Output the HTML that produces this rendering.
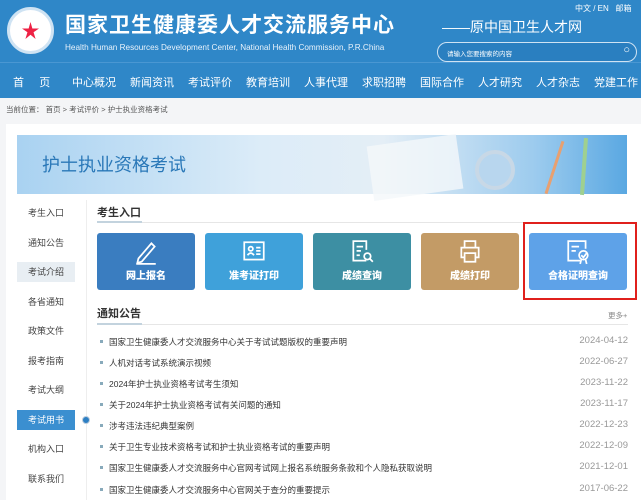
<!DOCTYPE html><html><head><meta charset="utf-8"><style>
*{margin:0;padding:0;box-sizing:border-box}
body{width:641px;height:500px;overflow:hidden;background:#f4f5f7;font-family:"Liberation Sans","Noto Sans CJK SC",sans-serif;position:relative}
.a{position:absolute}
.hd{left:0;top:0;width:641px;height:62px;background:#2f87c8}
.nav{left:0;top:62px;width:641px;height:36px;background:#2f87c8;border-top:1px solid #4a97d2}
.nav span{position:absolute;top:11px;color:#fff;font-size:11px}
.side div{position:absolute;left:17px;width:58px;height:20px;line-height:20px;text-align:center;font-size:9px;color:#444}
.card{position:absolute;top:233px;width:98px;height:57px;border-radius:3px;color:#fff;font-size:10px;font-weight:bold;text-align:center}
.card svg{position:absolute;left:37px;top:6px}
.card b{position:absolute;left:0;right:0;top:34px}
.li{position:absolute;left:100px;width:528px;font-size:8.5px;color:#333}
.li i{display:inline-block;width:3px;height:3px;background:#8ab;margin:0 6px 2px 0}
.li s{text-decoration:none;position:absolute;right:0;color:#999;font-size:9.5px;top:-1px}
</style></head><body>
<div class="a hd"></div>
<div class="a" style="left:7px;top:7px;width:47px;height:47px;border-radius:50%;background:#fff;border:3px solid #cfe3f3"><div style="position:absolute;left:12px;top:12px;width:17px;height:17px;background:#e24;clip-path:polygon(50% 0,61% 38%,100% 38%,68% 60%,80% 100%,50% 75%,20% 100%,32% 60%,0 38%,39% 38%)"></div></div>
<div class="a" style="left:65px;top:9px;color:#fff;font-size:21px;letter-spacing:1px;font-weight:bold">国家卫生健康委人才交流服务中心</div>
<div class="a" style="left:65px;top:43px;color:#e8f2fb;font-size:8.2px">Health Human Resources Development Center, National Health Commission, P.R.China</div>
<div class="a" style="left:442px;top:17px;color:#fff;font-size:14px">——原中国卫生人才网</div>
<div class="a" style="left:575px;top:3px;color:#fff;font-size:8px">中文 / EN &nbsp; 邮箱</div>
<div class="a" style="left:437px;top:42px;width:200px;height:20px;border:1px solid #cfe3f3;border-radius:10px;background:#2a7fc0;color:#fff;font-size:6.5px;padding:5px 0 0 9px">请输入您要搜索的内容<span style="position:absolute;right:6px;top:1px;font-size:11px">○</span></div>
<div class="a nav"><span style="left:13px">首&nbsp;&nbsp;&nbsp;&nbsp;&nbsp;页</span><span style="left:72px">中心概况</span><span style="left:130px">新闻资讯</span><span style="left:188px">考试评价</span><span style="left:246px">教育培训</span><span style="left:304px">人事代理</span><span style="left:362px">求职招聘</span><span style="left:420px">国际合作</span><span style="left:478px">人才研究</span><span style="left:536px">人才杂志</span><span style="left:594px">党建工作</span></div>
<div class="a" style="left:6px;top:104px;font-size:7.5px;color:#555">当前位置： 首页 &gt; 考试评价 &gt; 护士执业资格考试</div>
<div class="a" style="left:6px;top:124px;width:635px;height:376px;background:#fff"></div>
<div class="a" style="left:17px;top:135px;width:610px;height:59px;background:linear-gradient(90deg,#a9d2f1,#dcecf8 40%,#e4eef6 60%,#9ccbee 85%,#5aa8e2)"></div>
<div class="a" style="left:42px;top:151px;font-size:18px;color:#2a78b8">护士执业资格考试</div>
<div class="a" style="left:370px;top:140px;width:90px;height:55px;background:#f4f7fa;transform:rotate(-8deg);opacity:.8"></div>
<div class="a" style="left:475px;top:150px;width:40px;height:40px;border-radius:50%;border:4px solid #c8d8e6;background:#b8d6ee"></div>
<div class="a" style="left:553px;top:140px;width:3px;height:55px;background:#e8a070;transform:rotate(18deg)"></div>
<div class="a" style="left:582px;top:138px;width:4px;height:57px;background:#9fd090;transform:rotate(4deg)"></div>
<div class="a" style="left:86px;top:200px;width:1px;height:300px;background:#eee"></div>
<div class="side">
<div style="top:203px">考生入口</div><div style="top:233px">通知公告</div><div style="top:262px;background:#e8eef3">考试介绍</div><div style="top:292px">各省通知</div><div style="top:321px">政策文件</div><div style="top:351px">报考指南</div><div style="top:380px">考试大纲</div><div style="top:410px;background:#3b8fd0;color:#fff">考试用书</div><div style="top:439px">机构入口</div><div style="top:469px">联系我们</div>
</div>
<div class="a" style="left:82px;top:416px;width:8px;height:8px;border-radius:50%;background:#2d7fc3;border:1px solid #bcd"></div>
<div class="a" style="left:97px;top:204px;font-size:11px;color:#333;font-weight:bold">考生入口</div>
<div class="a" style="left:97px;top:222px;width:531px;height:1px;background:#e6e6e6"></div>
<div class="a" style="left:97px;top:221px;width:45px;height:2px;background:#c3d3de"></div>
<div class="card" style="left:97px;background:#3a7dc0"><svg width="24" height="26" viewBox="0 0 22 24" fill="none" stroke="#fff" stroke-width="1.6"><path d="M4 18 L16 4 L19 7 L7 21 L3 22 Z M2 23 H20"/></svg><b>网上报名</b></div>
<div class="card" style="left:205px;background:#3fa1da"><svg width="24" height="26" viewBox="0 0 22 24" fill="none" stroke="#fff" stroke-width="1.6"><rect x="2" y="3" width="18" height="16"/><circle cx="8" cy="9" r="2"/><path d="M5 15 Q8 11 11 15 M13 8 H17 M13 11 H17 M13 14 H17"/></svg><b>准考证打印</b></div>
<div class="card" style="left:313px;background:#3d8fa3"><svg width="24" height="26" viewBox="0 0 22 24" fill="none" stroke="#fff" stroke-width="1.6"><path d="M15 20 H3 V2 H15 V10 M6 7 H12 M6 11 H10 M6 15 H9"/><circle cx="16" cy="16" r="3"/><path d="M18 18 L21 21"/></svg><b>成绩查询</b></div>
<div class="card" style="left:421px;background:#c39b66"><svg width="24" height="26" viewBox="0 0 22 24" fill="none" stroke="#fff" stroke-width="1.6"><path d="M6 8 V2 H16 V8 M6 17 H3 V8 H19 V17 H16 M6 13 H16 V21 H6 Z"/></svg><b>成绩打印</b></div>
<div class="card" style="left:529px;background:#5ea2e8"><svg width="24" height="26" viewBox="0 0 22 24" fill="none" stroke="#fff" stroke-width="1.6"><path d="M13 20 H2 V2 H18 V9 M5 7 H12 M5 11 H9"/><circle cx="16" cy="15" r="4"/><path d="M14 15 L16 17 L19 13 M14 19 L13 23 M18 19 L19 23"/></svg><b>合格证明查询</b></div>
<div class="a" style="left:523px;top:222px;width:114px;height:78px;border:2px solid #e0201c"></div>
<div class="a" style="left:97px;top:305px;font-size:11px;color:#333;font-weight:bold">通知公告</div>
<div class="a" style="left:608px;top:310px;font-size:7.5px;color:#888">更多+</div>
<div class="a" style="left:97px;top:324px;width:531px;height:1px;background:#e6e6e6"></div>
<div class="a" style="left:97px;top:323px;width:45px;height:2px;background:#c3d3de"></div>
<div class="li" style="top:336px"><i></i>国家卫生健康委人才交流服务中心关于考试试题版权的重要声明<s>2024-04-12</s></div>
<div class="li" style="top:357px"><i></i>人机对话考试系统演示视频<s>2022-06-27</s></div>
<div class="li" style="top:378px"><i></i>2024年护士执业资格考试考生须知<s>2023-11-22</s></div>
<div class="li" style="top:399px"><i></i>关于2024年护士执业资格考试有关问题的通知<s>2023-11-17</s></div>
<div class="li" style="top:420px"><i></i>涉考违法违纪典型案例<s>2022-12-23</s></div>
<div class="li" style="top:441px"><i></i>关于卫生专业技术资格考试和护士执业资格考试的重要声明<s>2022-12-09</s></div>
<div class="li" style="top:462px"><i></i>国家卫生健康委人才交流服务中心官网考试网上报名系统服务条款和个人隐私获取说明<s>2021-12-01</s></div>
<div class="li" style="top:484px"><i></i>国家卫生健康委人才交流服务中心官网关于查分的重要提示<s>2017-06-22</s></div>
</body></html>
